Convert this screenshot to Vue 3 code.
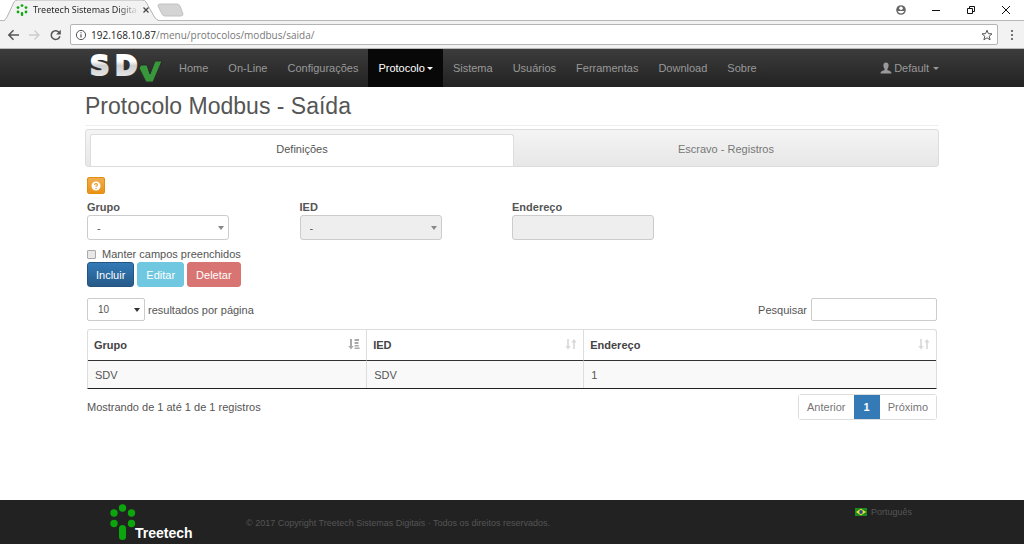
<script setup>
import { ref } from 'vue'

const menu = [
  { label: 'Home' },
  { label: 'On-Line' },
  { label: 'Configurações' },
  { label: 'Protocolo', active: true },
  { label: 'Sistema' },
  { label: 'Usuários' },
  { label: 'Ferramentas' },
  { label: 'Download' },
  { label: 'Sobre' },
]
const rows = [{ grupo: 'SDV', ied: 'SDV', endereco: '1' }]
const keep = ref(false)
const search = ref('')
</script>

<template>
  <div class="window">
    <header class="browser">
      <div class="titlebar">
        <div class="tab">
          <svg class="tab-shape" viewBox="0 0 155 21" width="155" height="21" aria-hidden="true">
            <path d="M0 21 L3 17 L10 2 Q11 0 14 0 H138 Q141 0 142 2 L151 18 L155 21" fill="#f2f2f2" stroke="#b4b4b4" />
          </svg>
          <div class="tab-content">
            <svg viewBox="0 0 12 12" width="12" height="12" aria-hidden="true">
              <g fill="#12a812">
                <circle cx="6" cy="1.6" r="1.4" /><circle cx="2" cy="3.6" r="1.4" /><circle cx="10" cy="3.6" r="1.4" />
                <circle cx="2" cy="8" r="1.4" /><circle cx="10" cy="8" r="1.4" />
                <rect x="4.8" y="8" width="2.4" height="4" rx="1" />
              </g>
            </svg>
            <span class="tab-title">Treetech Sistemas Digita</span>
            <button class="bare" aria-label="Fechar guia">
              <svg viewBox="0 0 8 8" width="8" height="8"><path d="M1.5 1.5 L6.5 6.5 M6.5 1.5 L1.5 6.5" stroke="#444" stroke-width="1.2" /></svg>
            </button>
          </div>
        </div>
        <button class="bare new-tab" aria-label="Nova guia">
          <svg viewBox="0 0 28 14" width="28" height="14"><path d="M3 1 H20 Q22 1 23 3 L26 11 Q26 13 24 13 H8 Q6 13 5 11 L1 3 Q1 1 3 1Z" fill="#d4d4d4" stroke="#c2c2c2" /></svg>
        </button>
        <div class="win-buttons">
          <button class="bare" aria-label="Perfil">
            <svg viewBox="0 0 12 12" width="12" height="12"><circle cx="6" cy="6" r="4.8" fill="#666" /><circle cx="6" cy="4.2" r="1.7" fill="#fff" /><path d="M2.6 7 H9.4 Q8.6 9.4 6 9.4 Q3.4 9.4 2.6 7Z" fill="#fff" /></svg>
          </button>
          <button class="bare" aria-label="Minimizar">
            <svg viewBox="0 0 12 12" width="12" height="12"><path d="M2 6.5 H10" stroke="#111" /></svg>
          </button>
          <button class="bare" aria-label="Restaurar">
            <svg viewBox="0 0 12 12" width="12" height="12" fill="none" stroke="#111"><path d="M2.5 4.5 H7.5 V9.5 H2.5Z" /><path d="M4.5 4.5 V2.5 H9.5 V7.5 H7.5" /></svg>
          </button>
          <button class="bare" aria-label="Fechar">
            <svg viewBox="0 0 12 12" width="12" height="12"><path d="M2 2 L10 10 M10 2 L2 10" stroke="#111" /></svg>
          </button>
        </div>
      </div>
      <div class="toolbar">
        <button class="bare" aria-label="Voltar">
          <svg viewBox="0 0 13 12" width="13" height="12" fill="none" stroke="#555" stroke-width="1.5"><path d="M12 6 H2 M6.5 1.3 L1.8 6 L6.5 10.7" /></svg>
        </button>
        <button class="bare" aria-label="Avançar">
          <svg viewBox="0 0 13 12" width="13" height="12" fill="none" stroke="#ccc" stroke-width="1.3"><path d="M1 6 H11 M6.5 1.5 L11 6 L6.5 10.5" /></svg>
        </button>
        <button class="bare" aria-label="Recarregar">
          <svg viewBox="0 0 13 12" width="13" height="12"><path d="M10.3 3.6 A4.4 4.4 0 1 0 10.9 7.3" fill="none" stroke="#555" stroke-width="1.5" /><path d="M11.8 0.8 V5.4 H7.2Z" fill="#555" /></svg>
        </button>
        <div class="address">
          <svg viewBox="0 0 12 12" width="12" height="12" fill="none" stroke="#555"><circle cx="6" cy="6" r="4.6" /><path d="M6 5.3 V8.6 M6 3.2 V4.3" stroke-width="1.2" /></svg>
          <span class="url"><b>192.168.10.87</b>/menu/protocolos/modbus/saida/</span>
          <svg viewBox="0 0 12 12" width="12" height="12" fill="none" stroke="#555"><path d="M6 1.2 L7.4 4.6 L11 4.9 L8.2 7.2 L9.1 10.8 L6 8.8 L2.9 10.8 L3.8 7.2 L1 4.9 L4.6 4.6Z" /></svg>
        </div>
        <button class="bare" aria-label="Menu">
          <svg viewBox="0 0 12 12" width="12" height="12" fill="#555"><circle cx="6" cy="2" r="1.1" /><circle cx="6" cy="6" r="1.1" /><circle cx="6" cy="10" r="1.1" /></svg>
        </button>
      </div>
    </header>

    <nav class="navbar">
      <div class="container nav-row">
        <a class="brand" href="#" aria-label="SDV">
          <svg viewBox="0 0 76 38" width="76" height="38">
            <defs>
              <linearGradient id="silver" gradientUnits="userSpaceOnUse" x1="0" y1="4" x2="0" y2="27">
                <stop offset="0.35" stop-color="#fff" /><stop offset="0.55" stop-color="#d0d0d0" /><stop offset="1" stop-color="#e4e4e4" />
              </linearGradient>
            </defs>
            <g class="logo-text" fill="url(#silver)" stroke="url(#silver)" stroke-width="2">
              <text x="4" y="26">S</text>
              <text x="29" y="26">D</text>
            </g>
            <path d="M53 19 L55 16 H61 L64 25 L69 12 H76 L67 33 H60Z" fill="#38963b" stroke="#2b2b2b" />
          </svg>
        </a>
        <ul class="menu">
          <li v-for="m in menu" :key="m.label">
            <a href="#" :class="{ active: m.active }">{{ m.label }}<i v-if="m.active" class="caret"></i></a>
          </li>
        </ul>
        <a class="user" href="#">
          <svg viewBox="0 0 12 12" width="12" height="12" fill="#999"><path d="M6 0.5 C8 0.5 8.8 2 8.6 4 C8.4 5.6 7.6 6.6 7.4 7 V8 C8.6 8.8 11.5 9 11.5 11.5 H0.5 C0.5 9 3.4 8.8 4.6 8 V7 C4.4 6.6 3.6 5.6 3.4 4 C3.2 2 4 0.5 6 0.5Z" /></svg>
          Default <i class="caret"></i>
        </a>
      </div>
    </nav>

    <main class="container">
      <h1>Protocolo Modbus - Saída</h1>
      <div class="tabs" role="tablist">
        <button role="tab" aria-selected="true" class="selected">Definições</button>
        <button role="tab" aria-selected="false">Escravo - Registros</button>
      </div>

      <div class="content">
        <button class="help" aria-label="Ajuda">
          <svg viewBox="0 0 10 10" width="10" height="10"><circle cx="5" cy="5" r="4.5" fill="#fff" /><path d="M3.5 4 Q3.5 2.6 5 2.6 Q6.5 2.6 6.5 3.9 Q6.5 4.7 5 5.3 V6" fill="none" stroke="#e9972a" stroke-width="1.1" /><circle cx="5" cy="7.4" r="0.7" fill="#e9972a" /></svg>
        </button>

        <form class="fields" @submit.prevent>
          <div class="field">
            <label for="grupo">Grupo</label>
            <div class="select">
              <select id="grupo"><option>-</option></select>
              <i class="arrow"></i>
            </div>
          </div>
          <div class="field">
            <label for="ied">IED</label>
            <div class="select">
              <select id="ied" disabled><option>-</option></select>
              <i class="arrow"></i>
            </div>
          </div>
          <div class="field">
            <label for="endereco">Endereço</label>
            <input id="endereco" type="text" disabled />
          </div>
        </form>

        <label class="keep"><input v-model="keep" type="checkbox" />Manter campos preenchidos</label>
        <div class="actions">
          <button class="btn primary">Incluir</button>
          <button class="btn info">Editar</button>
          <button class="btn danger">Deletar</button>
        </div>

        <div class="filters">
          <label class="length">
            <span class="select small">
              <select><option>10</option></select>
              <i class="arrow dark"></i>
            </span>
            resultados por página
          </label>
          <label class="search">Pesquisar <input v-model="search" type="text" /></label>
        </div>

        <table>
          <colgroup><col class="c1" /><col class="c2" /><col /></colgroup>
          <thead>
            <tr>
              <th>
                <div class="th">Grupo
                  <svg viewBox="0 0 12 12" width="12" height="12" fill="#a8a8a8"><path d="M2 0 H4 V7 H5.6 L3 10.4 L0.4 7 H2Z M6.6 0 H11 V2 H6.6Z M6.6 3 H10.4 V5 H6.6Z M6.6 6 H10.8 V7.6 H6.6Z M6.6 8.4 H11.6 V10 H6.6Z" /></svg>
                </div>
              </th>
              <th>
                <div class="th">IED
                  <svg viewBox="0 0 12 12" width="12" height="12" fill="#d8d8d8"><path d="M2.2 0 H3.8 V7 H5.6 L3 10.4 L0.4 7 H2.2Z M8.2 10 H9.8 V3.4 H11.6 L9 0 L6.4 3.4 H8.2Z" /></svg>
                </div>
              </th>
              <th>
                <div class="th">Endereço
                  <svg viewBox="0 0 12 12" width="12" height="12" fill="#d8d8d8"><path d="M2.2 0 H3.8 V7 H5.6 L3 10.4 L0.4 7 H2.2Z M8.2 10 H9.8 V3.4 H11.6 L9 0 L6.4 3.4 H8.2Z" /></svg>
                </div>
              </th>
            </tr>
          </thead>
          <tbody>
            <tr v-for="r in rows" :key="r.grupo">
              <td>{{ r.grupo }}</td><td>{{ r.ied }}</td><td>{{ r.endereco }}</td>
            </tr>
          </tbody>
        </table>

        <div class="summary">
          <span>Mostrando de 1 até 1 de 1 registros</span>
          <div class="pages">
            <button>Anterior</button><button class="current">1</button><button>Próximo</button>
          </div>
        </div>
      </div>
    </main>

    <footer>
      <div class="container foot-row">
        <a class="company" href="#">
          <svg viewBox="0 0 28 36" width="28" height="36" fill="#0da50d" aria-hidden="true">
            <circle cx="13.500" cy="4" r="3.700" /><circle cx="5" cy="9" r="3.700" /><circle cx="22.500" cy="9" r="3.700" />
            <circle cx="5" cy="19.500" r="3.700" /><circle cx="22.500" cy="19.500" r="3.700" />
            <rect x="10" y="21" width="7" height="15" rx="3.500" />
          </svg>
          <span>Treetech</span>
        </a>
        <span class="copy">© 2017 Copyright Treetech Sistemas Digitais · Todos os direitos reservados.</span>
        <a class="lang" href="#">
          <svg viewBox="0 0 12 8" width="12" height="8" aria-hidden="true"><rect width="12" height="8" fill="#1c8a1c" /><path d="M6 0.8 L11 4 L6 7.200 L1 4Z" fill="#f4e62a" /><circle cx="6" cy="4" r="1.900" fill="#274a9e" /></svg>
          Português
        </a>
      </div>
    </footer>
  </div>
</template>

<style>
body { margin: 0; background: #fff; }
</style>

<style scoped>
* { box-sizing: border-box; }
.window { display: flex; flex-direction: column; min-height: 100vh; font: 11px/16px "Liberation Sans", Arial, sans-serif; color: #555; }
button, input, select { font: inherit; color: inherit; margin: 0; }
a { text-decoration: none; color: inherit; }
svg { display: block; flex: none; }
.bare { display: flex; padding: 0; border: 0; background: none; }
.container { width: 100%; max-width: 854px; margin: 0 auto; }

.titlebar { display: flex; align-items: center; height: 21px; padding-left: 4px; border-bottom: 1px solid #b8b8b8; }
.tab { display: grid; height: 21px; width: 155px; }
.tab > * { grid-area: 1 / 1; }
.tab-shape { z-index: 0; }
.tab-content { display: flex; align-items: center; gap: 5px; padding: 0 13px 0 12px; z-index: 1; min-width: 0; }
.tab-title { flex: 1; white-space: nowrap; font: 9px/14px "Noto Sans", "Open Sans", sans-serif; color: transparent; background: linear-gradient(90deg, #222 82%, #ddd); background-clip: text; }
.new-tab { margin-left: -2px; }
.win-buttons { display: flex; gap: 23px; margin-left: auto; padding-right: 12px; }
.toolbar { display: flex; align-items: center; gap: 8px; height: 28px; padding: 0 6px 0 7px; background: #f2f2f2; border-bottom: 1px solid #b8b8b8; }
.address { flex: 1; display: flex; align-items: center; gap: 4px; height: 21px; padding: 0 4px; border: 1px solid #b4b4b4; border-radius: 2px; background: #fff; }
.url { flex: 1; font: 10px/16px "Open Sans", Roboto, sans-serif; color: #777; }
.url b { font-weight: 400; color: #222; }

.navbar { background: linear-gradient(#3c3c3c, #222); color: #999; }
.nav-row { display: flex; height: 38px; }
.brand { display: flex; align-items: center; width: 84px; padding-left: 1px; }
.logo-text { font: bold 27px "DejaVu Sans", sans-serif; }
.menu { display: flex; margin: 0; padding: 0; list-style: none; }
.menu a { display: flex; align-items: center; height: 38px; padding: 0 10px; }
.menu .active { background: #080808; color: #fff; }
.caret { display: inline-block; margin-left: 2px; border: 3px solid transparent; border-top-color: currentColor; border-bottom: 0; }
.user { display: flex; align-items: center; gap: 2px; margin-left: auto; }

main { flex: 1; }
h1 { margin: 0 0 3px; padding: 4px 0; border-bottom: 1px solid #eee; font-size: 23px; line-height: 30px; font-weight: 400; color: #555; }
.tabs { display: grid; grid-template-columns: 1fr 1fr; height: 38px; padding: 4px 0 0 4px; border: 1px solid #ddd; border-radius: 3px; background: linear-gradient(#f4f4f4, #e7e7e7); }
.tabs button { padding: 0 0 3px; border: 0; background: none; color: #777; }
.tabs .selected { background: #fff; border: 1px solid #ddd; border-bottom: 0; border-radius: 3px 3px 0 0; color: #555; }
.content { padding: 10px 2px 0; }
.help { display: flex; align-items: center; justify-content: center; width: 18px; height: 17px; padding: 0; border: 1px solid #e38d13; border-radius: 2px; background: linear-gradient(#f0ad4e, #eb9316); }
.fields { display: grid; grid-template-columns: repeat(4, 1fr); margin-top: 5px; }
.field { display: flex; flex-direction: column; width: 67%; }
.field label { font-weight: bold; }
.select { display: grid; align-items: center; }
.select > * { grid-area: 1 / 1; }
select, input[type="text"] { width: 100%; height: 25px; padding: 0 9px; border: 1px solid #ccc; border-radius: 3px; background: #fff; appearance: none; opacity: 1; }
select:disabled, input:disabled { background: #eee; }
.arrow { justify-self: end; margin-right: 5px; border: 3px solid transparent; border-top: 4px solid #888; border-bottom: 0; pointer-events: none; }
.arrow.dark { border-top-color: #333; }
.keep { display: flex; align-items: center; gap: 6px; margin-top: 6px; }
.keep input { appearance: none; width: 9px; height: 9px; border: 1px solid #aaa; border-radius: 1px; background: #e8e8e8; }
.keep input:checked { background: #337ab7; }
.actions { display: flex; gap: 3px; }
.btn { height: 25px; padding: 0 8px; border: 1px solid; border-radius: 3px; color: #fff; }
.primary { background: linear-gradient(#337ab7, #265a88); border-color: #245580; }
.info { background: #6fc7e0; border-color: #6fc7e0; }
.danger { background: #d87572; border-color: #d87572; }
.filters { display: flex; justify-content: space-between; margin: 11px 0 8px; }
.filters label { display: flex; align-items: center; gap: 3px; }
.filters .search { gap: 4px; }
.filters select, .filters input { height: 23px; border-radius: 2px; }
.filters select { padding-left: 10px; }
.small { width: 58px; font-size: 10px; }
.filters .search input { width: 126px; }

table { width: 100%; table-layout: fixed; border-collapse: separate; border-spacing: 0; border: 1px solid #ddd; border-bottom: 1px solid #222; border-radius: 3px 3px 0 0; }
.c1 { width: 32.8%; }
.c2 { width: 25.6%; }
th, td { padding: 0 7px; text-align: left; }
th + th, td + td { border-left: 1px solid #ddd; }
th { height: 31px; padding: 0 6px; border-bottom: 1px solid #333; color: #444; }
td { height: 27px; background: #f9f9f9; }
.th { display: flex; justify-content: space-between; align-items: center; }
.summary { display: flex; justify-content: space-between; align-items: center; margin-top: 5px; }
.pages { display: flex; border: 1px solid #ddd; border-radius: 3px; }
.pages button { height: 24px; padding: 0 8px; border: 0; background: #fff; color: #777; }
.pages .current { padding: 0 10px; background: #337ab7; color: #fff; font-weight: bold; }

footer { background: #222; color: #555; }
.foot-row { display: flex; height: 44px; padding: 4px 27px 0 24px; }
.company { display: flex; align-items: flex-end; height: 36px; width: 137px; }
.company span { margin-left: -2px; font: bold 14px/14px "Liberation Sans", sans-serif; color: #fff; }
.copy { padding-top: 11px; font-size: 9px; }
.lang { display: flex; align-items: center; gap: 4px; height: 16px; margin-left: auto; font-size: 9px; }
</style>
